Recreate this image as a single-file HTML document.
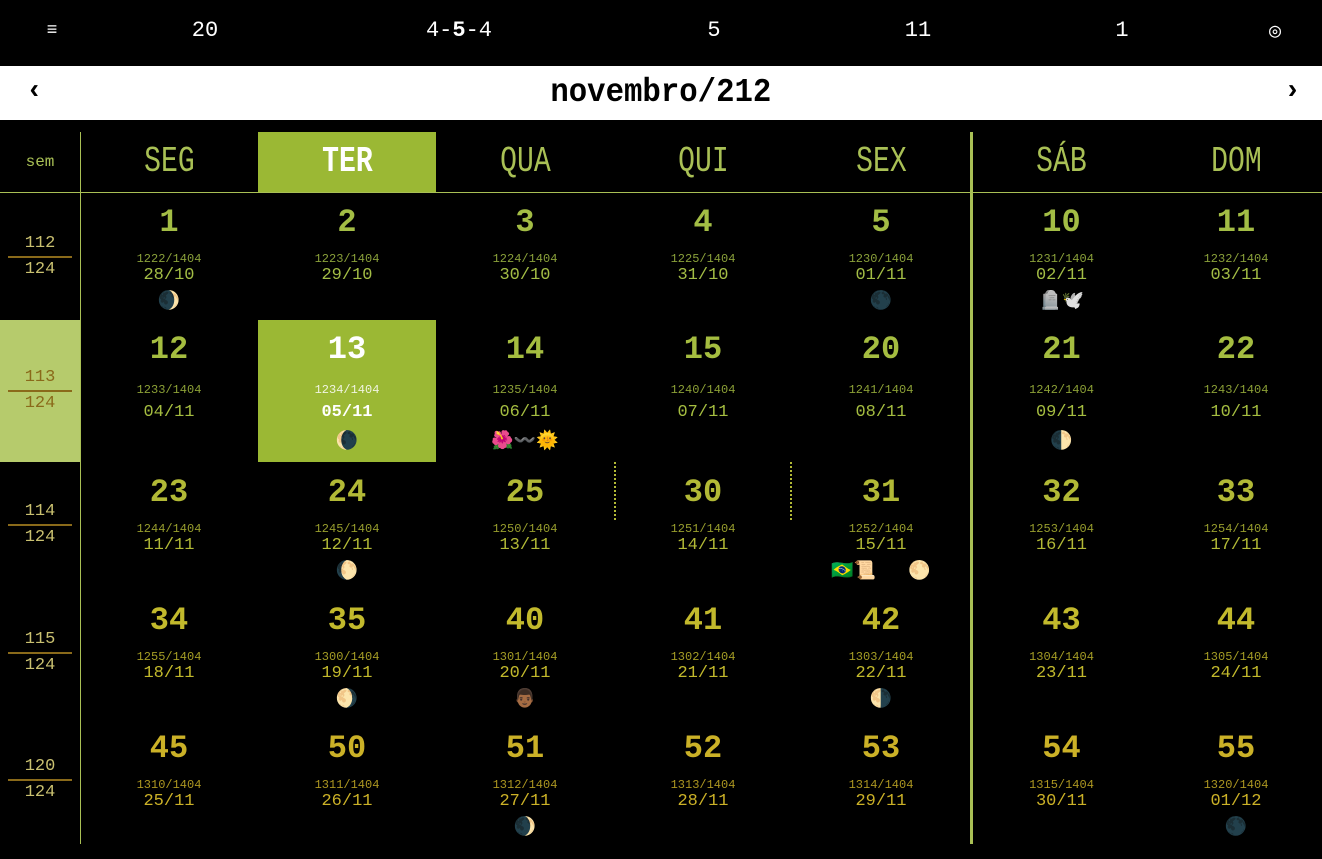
<!DOCTYPE html>
<html><head><meta charset="utf-8"><style>
*{margin:0;padding:0;box-sizing:border-box}
body{width:1322px;height:859px;background:#000;position:relative;overflow:hidden;font-family:"Liberation Mono","DejaVu Sans Mono",monospace}
.a{position:absolute}
.top div{position:absolute;top:18px;color:#fff;font-size:22px;width:80px;text-align:center;margin-left:-40px}
.bar{left:0;top:66px;width:1322px;height:54px;background:#fff}
.hd{position:absolute;top:132px;height:60px;text-align:center;font-size:36px;line-height:60px;color:#a9c055}
.hd span{display:inline-block;transform:scaleX(.78)}
.c{position:absolute;text-align:center}
.c div{position:absolute;left:0;width:100%;line-height:1}
.n{font-size:32px;font-weight:bold}
.s{font-size:12px;opacity:.85}
.d{font-size:17px}
.e{font-size:18px}
.r1 .n{top:15px}.r1 .s{top:61px}.r1 .d{top:75px}.r1 .e{top:101px}
.r2 .n{top:14px}.r2 .s{top:64px}.r2 .d{top:84px}.r2 .e{top:113px}
.r1{color:#a3bd45}.r2{color:#a5bd40}.r3{color:#b2b936}.r4{color:#c2b92c}.r5{color:#cbb127}
.w{position:absolute;left:0;width:80px;text-align:center;font-size:17px;color:#c9c070}
.w .t{position:absolute;width:100%;top:-23px}
.w .l{position:absolute;left:8px;width:64px;top:-1px;height:2px;background:#8a6a1a}
.w .b{position:absolute;width:100%;top:3px}
</style></head><body>
<div class="top">
<div style="left:52px;font-size:18px;top:21px">≡</div>
<div style="left:205px">20</div>
<div style="left:459px">4-<b>5</b>-4</div>
<div style="left:714px">5</div>
<div style="left:918px">11</div>
<div style="left:1122px">1</div>
<div style="left:1275px;font-size:20px">◎</div>
</div>
<div class="a bar"></div>
<div class="a" style="left:26px;top:76px;font-size:28px;font-weight:bold;color:#000">‹</div>
<div class="a" style="left:1284px;top:76px;font-size:28px;font-weight:bold;color:#000">›</div>
<div class="a" style="left:0;width:1322px;top:74px;text-align:center;font-size:33px;font-weight:bold;color:#000"><span style="display:inline-block;transform:scaleX(.93)">novembro/212</span></div>

<div class="a" style="left:80px;top:132px;width:1px;height:712px;background:#a9c055"></div>
<div class="a" style="left:0;top:192px;width:1322px;height:1px;background:#a9c055"></div>
<div class="a" style="left:970px;top:132px;width:3px;height:712px;background:#a9c055"></div>
<div class="a" style="left:258px;top:132px;width:178px;height:60px;background:#9bb834"></div>
<div class="a" style="left:0;top:320px;width:80px;height:142px;background:#b6cb6c"></div>
<div class="a" style="left:258px;top:320px;width:178px;height:142px;background:#9bb834"></div>
<div class="a" style="left:614px;top:462px;border-left:2px dotted #b2b936;height:58px"></div>
<div class="a" style="left:790px;top:462px;border-left:2px dotted #b2b936;height:58px"></div>

<div class="hd" style="left:0;width:80px;font-size:16px;color:#a9c055">sem</div>
<div class="hd" style="left:80px;width:178px"><span>SEG</span></div>
<div class="hd" style="left:258px;width:178px;color:#fff;font-weight:bold"><span>TER</span></div>
<div class="hd" style="left:436px;width:178px"><span>QUA</span></div>
<div class="hd" style="left:614px;width:178px"><span>QUI</span></div>
<div class="hd" style="left:792px;width:178px"><span>SEX</span></div>
<div class="hd" style="left:973px;width:177px"><span>SÁB</span></div>
<div class="hd" style="left:1150px;width:172px"><span>DOM</span></div>

<div class="w" style="top:257px"><div class="t">112</div><div class="l"></div><div class="b">124</div></div>
<div class="w" style="top:391px;color:#8a6a1a"><div class="t">113</div><div class="l"></div><div class="b">124</div></div>
<div class="w" style="top:525px"><div class="t">114</div><div class="l"></div><div class="b">124</div></div>
<div class="w" style="top:653px"><div class="t">115</div><div class="l"></div><div class="b">124</div></div>
<div class="w" style="top:780px"><div class="t">120</div><div class="l"></div><div class="b">124</div></div>

<!-- row1 -->
<div class="c r1" style="top:192px;left:80px;width:178px"><div class="n">1</div><div class="s">1222/1404</div><div class="d">28/10</div><div class="e">🌒</div></div>
<div class="c r1" style="top:192px;left:258px;width:178px"><div class="n">2</div><div class="s">1223/1404</div><div class="d">29/10</div></div>
<div class="c r1" style="top:192px;left:436px;width:178px"><div class="n">3</div><div class="s">1224/1404</div><div class="d">30/10</div></div>
<div class="c r1" style="top:192px;left:614px;width:178px"><div class="n">4</div><div class="s">1225/1404</div><div class="d">31/10</div></div>
<div class="c r1" style="top:192px;left:792px;width:178px"><div class="n">5</div><div class="s">1230/1404</div><div class="d">01/11</div><div class="e">🌑</div></div>
<div class="c r1" style="top:192px;left:973px;width:177px"><div class="n">10</div><div class="s">1231/1404</div><div class="d">02/11</div><div class="e">🪦🕊️</div></div>
<div class="c r1" style="top:192px;left:1150px;width:172px"><div class="n">11</div><div class="s">1232/1404</div><div class="d">03/11</div></div>
<!-- row2 -->
<div class="c r2" style="top:320px;left:80px;width:178px"><div class="n">12</div><div class="s">1233/1404</div><div class="d">04/11</div></div>
<div class="c r2" style="top:320px;left:258px;width:178px;color:#fff"><div class="n">13</div><div class="s">1234/1404</div><div class="d" style="font-weight:bold">05/11</div><div class="e">🌘</div></div>
<div class="c r2" style="top:320px;left:436px;width:178px"><div class="n">14</div><div class="s">1235/1404</div><div class="d">06/11</div><div class="e">🌺〰️🌞</div></div>
<div class="c r2" style="top:320px;left:614px;width:178px"><div class="n">15</div><div class="s">1240/1404</div><div class="d">07/11</div></div>
<div class="c r2" style="top:320px;left:792px;width:178px"><div class="n">20</div><div class="s">1241/1404</div><div class="d">08/11</div></div>
<div class="c r2" style="top:320px;left:973px;width:177px"><div class="n">21</div><div class="s">1242/1404</div><div class="d">09/11</div><div class="e">🌓</div></div>
<div class="c r2" style="top:320px;left:1150px;width:172px"><div class="n">22</div><div class="s">1243/1404</div><div class="d">10/11</div></div>
<!-- row3 -->
<div class="c r1 r3" style="top:462px;left:80px;width:178px"><div class="n">23</div><div class="s">1244/1404</div><div class="d">11/11</div></div>
<div class="c r1 r3" style="top:462px;left:258px;width:178px"><div class="n">24</div><div class="s">1245/1404</div><div class="d">12/11</div><div class="e">🌔</div></div>
<div class="c r1 r3" style="top:462px;left:436px;width:178px"><div class="n">25</div><div class="s">1250/1404</div><div class="d">13/11</div></div>
<div class="c r1 r3" style="top:462px;left:614px;width:178px"><div class="n">30</div><div class="s">1251/1404</div><div class="d">14/11</div></div>
<div class="c r1 r3" style="top:462px;left:792px;width:178px"><div class="n">31</div><div class="s">1252/1404</div><div class="d">15/11</div><div class="e">🇧🇷📜&nbsp;&nbsp;&nbsp;🌕</div></div>
<div class="c r1 r3" style="top:462px;left:973px;width:177px"><div class="n">32</div><div class="s">1253/1404</div><div class="d">16/11</div></div>
<div class="c r1 r3" style="top:462px;left:1150px;width:172px"><div class="n">33</div><div class="s">1254/1404</div><div class="d">17/11</div></div>
<!-- row4 -->
<div class="c r1 r4" style="top:590px;left:80px;width:178px"><div class="n">34</div><div class="s">1255/1404</div><div class="d">18/11</div></div>
<div class="c r1 r4" style="top:590px;left:258px;width:178px"><div class="n">35</div><div class="s">1300/1404</div><div class="d">19/11</div><div class="e">🌖</div></div>
<div class="c r1 r4" style="top:590px;left:436px;width:178px"><div class="n">40</div><div class="s">1301/1404</div><div class="d">20/11</div><div class="e">👨🏾</div></div>
<div class="c r1 r4" style="top:590px;left:614px;width:178px"><div class="n">41</div><div class="s">1302/1404</div><div class="d">21/11</div></div>
<div class="c r1 r4" style="top:590px;left:792px;width:178px"><div class="n">42</div><div class="s">1303/1404</div><div class="d">22/11</div><div class="e">🌗</div></div>
<div class="c r1 r4" style="top:590px;left:973px;width:177px"><div class="n">43</div><div class="s">1304/1404</div><div class="d">23/11</div></div>
<div class="c r1 r4" style="top:590px;left:1150px;width:172px"><div class="n">44</div><div class="s">1305/1404</div><div class="d">24/11</div></div>
<!-- row5 -->
<div class="c r1 r5" style="top:718px;left:80px;width:178px"><div class="n">45</div><div class="s">1310/1404</div><div class="d">25/11</div></div>
<div class="c r1 r5" style="top:718px;left:258px;width:178px"><div class="n">50</div><div class="s">1311/1404</div><div class="d">26/11</div></div>
<div class="c r1 r5" style="top:718px;left:436px;width:178px"><div class="n">51</div><div class="s">1312/1404</div><div class="d">27/11</div><div class="e">🌒</div></div>
<div class="c r1 r5" style="top:718px;left:614px;width:178px"><div class="n">52</div><div class="s">1313/1404</div><div class="d">28/11</div></div>
<div class="c r1 r5" style="top:718px;left:792px;width:178px"><div class="n">53</div><div class="s">1314/1404</div><div class="d">29/11</div></div>
<div class="c r1 r5" style="top:718px;left:973px;width:177px"><div class="n">54</div><div class="s">1315/1404</div><div class="d">30/11</div></div>
<div class="c r1 r5" style="top:718px;left:1150px;width:172px"><div class="n">55</div><div class="s">1320/1404</div><div class="d">01/12</div><div class="e">🌑</div></div>
</body></html>
